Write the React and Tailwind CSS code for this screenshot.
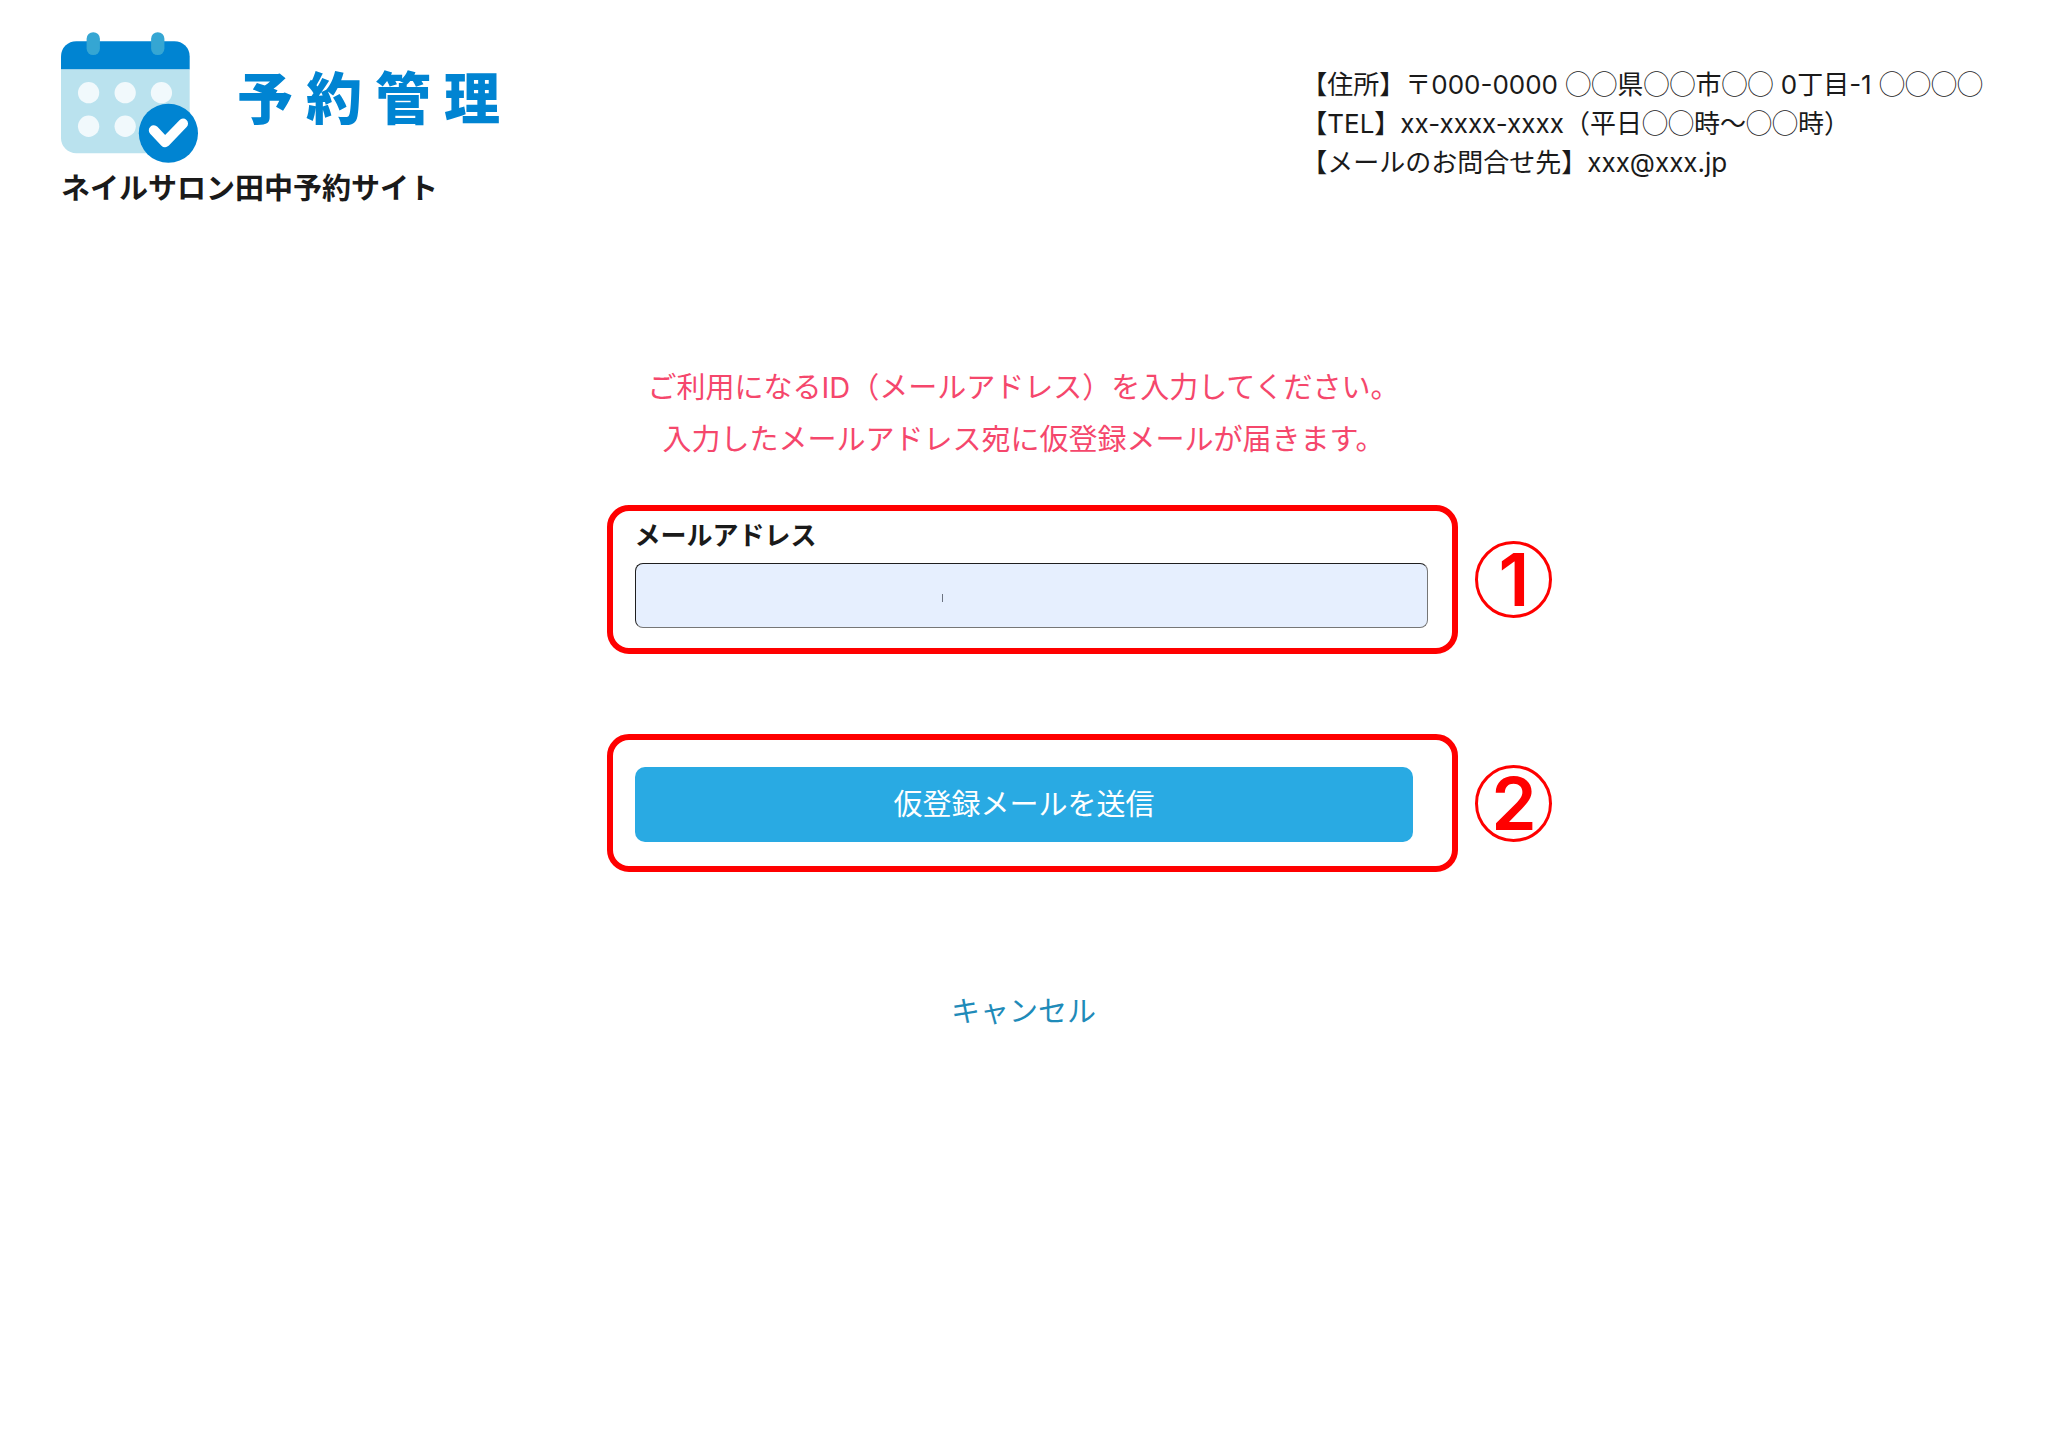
function CalendarLogo() {
  return (
    <svg className="h-[131px] w-[137px] shrink-0" viewBox="33 36 412 393" aria-hidden="true">
      <path d="M33 148V109a46 46 0 0 1 46-46h295a46 46 0 0 1 46 46v39z" fill="#0084d2" />
      <path d="M33 148h387v206a46 46 0 0 1-46 46H79a46 46 0 0 1-46-46z" fill="#bae2ee" />
      <rect x="110" y="36" width="40" height="69" rx="20" fill="#35a6d3" />
      <rect x="304" y="36" width="40" height="69" rx="20" fill="#35a6d3" />
      <g fill="#f1f9fc">
        <circle cx="116" cy="218" r="32" />
        <circle cx="226" cy="218" r="32" />
        <circle cx="335" cy="218" r="32" />
        <circle cx="116" cy="319" r="32" />
        <circle cx="226" cy="319" r="32" />
      </g>
      <circle cx="356" cy="340" r="89" fill="#0084d2" />
      <path
        d="M312 331L346 367L400 311"
        fill="none"
        stroke="#fff"
        strokeWidth="30"
        strokeLinecap="round"
        strokeLinejoin="round"
      />
    </svg>
  );
}

function Blank({ children }) {
  return <span className="font-['Noto_Sans_CJK_JP',sans-serif] leading-none">{children}</span>;
}

function StepFrame({ number, className, children }) {
  return (
    <div className={`relative -ml-7 -mr-[46px] rounded-[22px] border-6 border-[#ff0000] pl-[22px] ${className}`}>
      {children}
      <div className="absolute inset-y-0 left-full ml-[23px] flex items-center">
        <span className="flex size-[77px] items-center justify-center rounded-full border-3 border-[#ff0000] font-[Inter,sans-serif] text-[73px] leading-none font-semibold text-[#ff0000]">
          {number}
        </span>
      </div>
    </div>
  );
}

export default function App() {
  return (
    <div
      lang="ja"
      className="min-h-screen bg-white font-[Inter,'Noto_Sans_CJK_JP',sans-serif] text-[29px] leading-9 text-[#1a1a1a]"
    >
      <header className="flex items-start justify-between pt-8 pr-16 pl-[61px]">
        <div>
          <div className="flex items-center gap-[39px]">
            <CalendarLogo />
            <div className="flex gap-[13px] pb-1.5 font-['Noto_Sans_CJK_JP',sans-serif] text-[56px] leading-none font-black text-[#0084d2]">
              <span>予</span>
              <span>約</span>
              <span>管</span>
              <span>理</span>
            </div>
          </div>
          <h1 className="mt-2 font-bold">ネイルサロン田中予約サイト</h1>
        </div>
        <address className="mt-[33px] text-[26px] leading-[39px] whitespace-nowrap not-italic">
          <p>
            【住所】〒000-0000 <Blank>◯◯</Blank>県<Blank>◯◯</Blank>市<Blank>◯◯</Blank> 0丁目-1 <Blank>◯◯◯◯</Blank>
          </p>
          <p>
            【TEL】xx-xxxx-xxxx（平日<Blank>◯◯</Blank>時〜<Blank>◯◯</Blank>時）
          </p>
          <p>【メールのお問合せ先】xxx@xxx.jp</p>
        </address>
      </header>

      <main className="mx-auto mt-[155px] w-[38%]">
        <div className="text-center leading-[52px] whitespace-nowrap text-[#f5476c]">
          <p>ご利用になるID（メールアドレス）を入力してください。</p>
          <p>入力したメールアドレス宛に仮登録メールが届きます。</p>
        </div>

        <form className="mt-[39px]" onSubmit={(event) => event.preventDefault()}>
          <StepFrame number="1" className="pt-[7px] pr-6 pb-5">
            <label htmlFor="email" className="block text-[26px] leading-9 font-bold">
              メールアドレス
            </label>
            <div className="relative mt-[9px]">
              <input
                id="email"
                type="email"
                className="block h-[65px] w-full rounded-lg border border-t-[#1f1f1f] border-r-[#767676] border-b-[#767676] border-l-[#1f1f1f] bg-[#e6effe] px-4"
              />
              <span className="absolute top-[31px] left-[307px] h-2 w-px bg-[#6b7280]" />
            </div>
          </StepFrame>

          <StepFrame number="2" className="mt-20 pt-[27px] pr-[39px] pb-6">
            <button type="submit" className="block h-[75px] w-full rounded-[10px] bg-[#29aae3] text-white">
              仮登録メールを送信
            </button>
          </StepFrame>
        </form>

        <p className="mt-[122px] text-center">
          <a href="#cancel" className="text-[#1f8bb9]">
            キャンセル
          </a>
        </p>
      </main>
    </div>
  );
}
